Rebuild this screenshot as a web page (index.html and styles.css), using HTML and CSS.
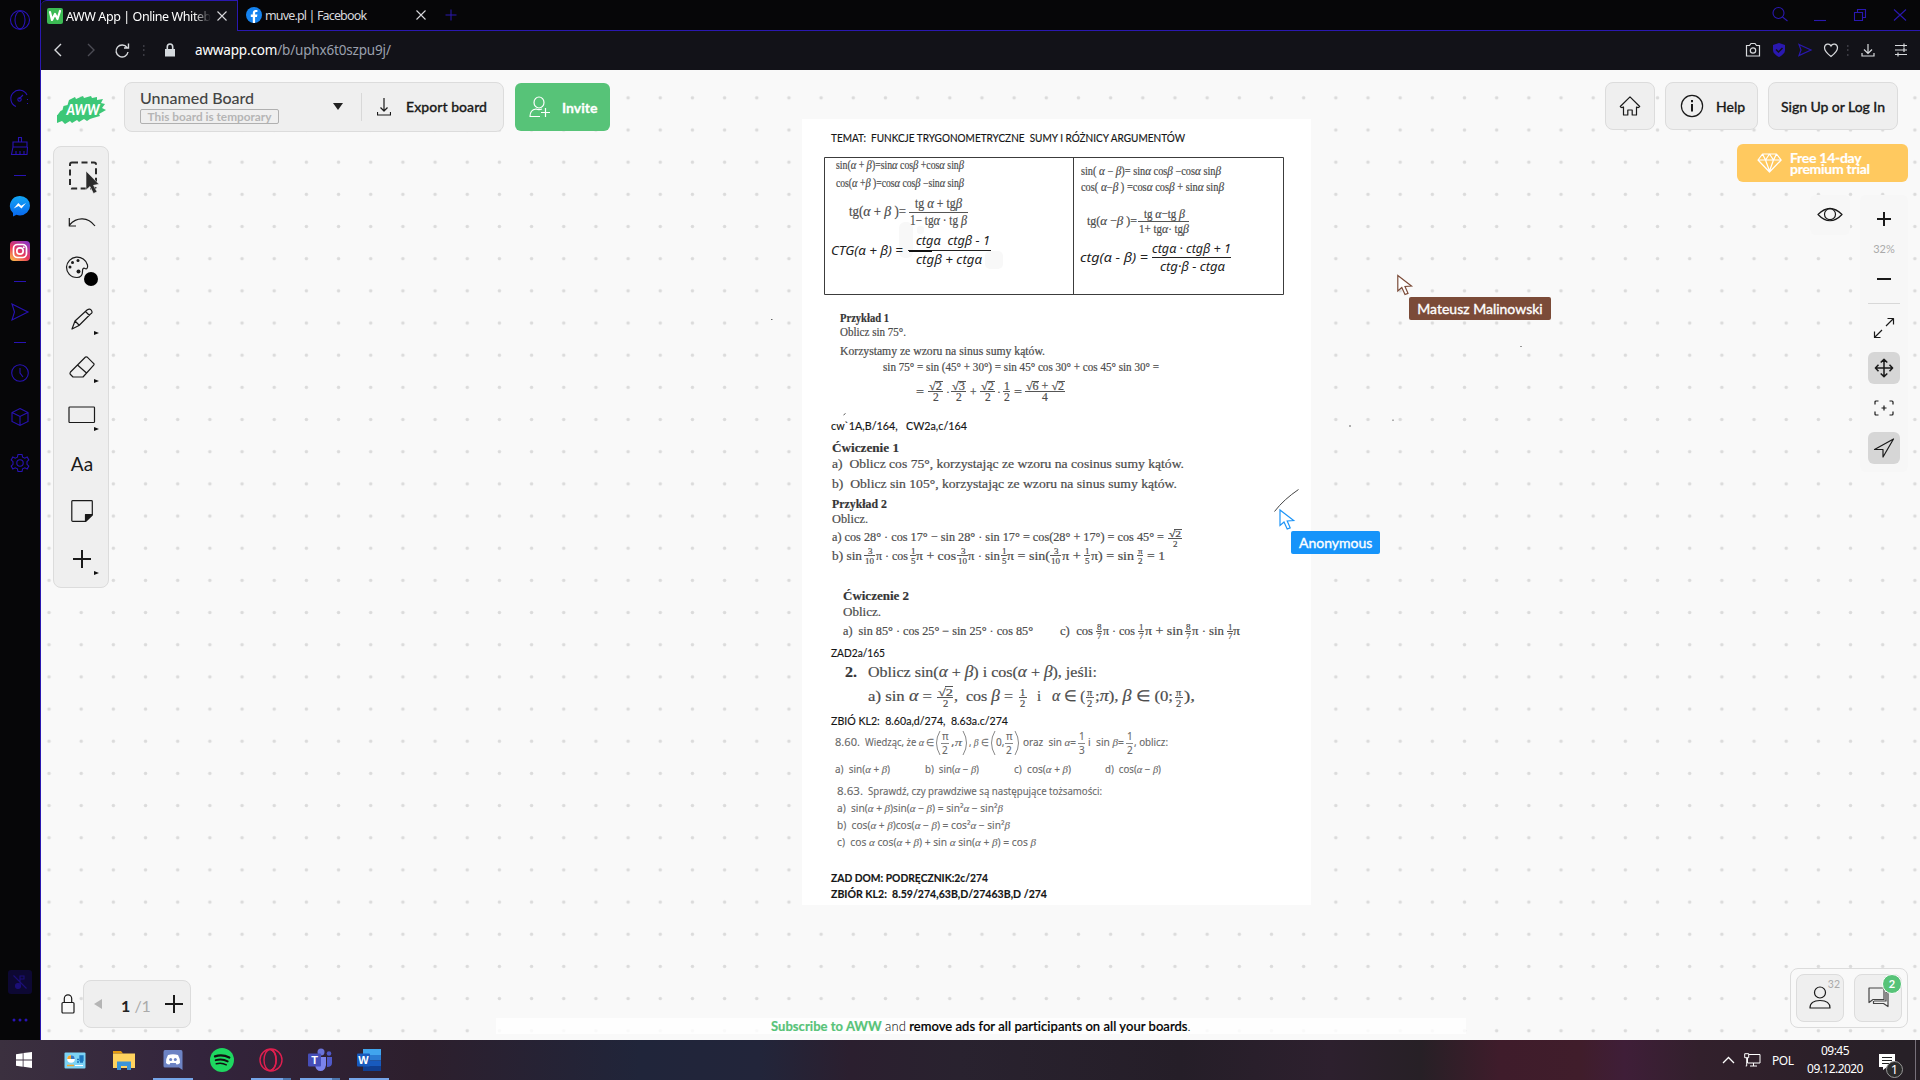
FILE: index.html
```html
<!DOCTYPE html>
<html lang="pl">
<head>
<meta charset="utf-8">
<title>AWW App | Online Whiteboard</title>
<link rel="stylesheet" href="styles.css">
</head>
<body>
<div class="desktop">
  <div class="browser">
    <nav class="sidebar">
      <div class="side h40"><svg width="22" height="22" viewBox="0 0 22 22"><circle cx="11" cy="11" r="9.5"/><ellipse cx="11" cy="11" rx="5" ry="8.7"/></svg></div>
      <div class="side h46 gap36"><svg width="22" height="22" viewBox="0 0 22 22"><path d="M7 18.5A8.500 8.500 0 1 1 18 7M10 11l4-4M18.500 11v1M18.500 15v1"/><circle cx="10.500" cy="11.500" r="1.700"/></svg></div>
      <div class="side h48"><svg width="22" height="22" viewBox="0 0 22 22"><path d="M9.500 7V2.500h3V7M4 7h14v5H4zM4 12l-1.500 7.500h15.500l.5-7.500M7 19v-3M11 19v-3M15 19v-3"/></svg></div>
      <div class="side h10"><i class="dash"></i></div>
      <div class="side h52"><svg class="solid" width="22" height="22" viewBox="0 0 22 22"><defs><linearGradient id="ms" x2="0" y2="1"><stop stop-color="#12a6f5"/><stop offset="1" stop-color="#0866ee"/></linearGradient></defs><path fill="url(#ms)" d="M11 1a10 9.700 0 0 1 0 19.400c-1.200 0-2.500-.2-3.500-.6L4 21.500v-3.600A9.800 9.800 0 0 1 11 1z"/><path fill="#fff" d="M4.700 13.500 9.300 8l2.900 2.700L17 8l-4.500 5.400-2.900-2.500z"/></svg></div>
      <div class="side h38"><svg class="solid" width="22" height="22" viewBox="0 0 22 22"><defs><linearGradient id="ig" x1=".1" y1="1" x2=".8" y2="0"><stop stop-color="#fdc14b"/><stop offset=".45" stop-color="#e9395a"/><stop offset="1" stop-color="#8f35c4"/></linearGradient></defs><rect x="1" y="1" width="20" height="20" rx="4" fill="url(#ig)"/><g fill="none" stroke="#fff" stroke-width="1.700"><rect x="4.500" y="4.500" width="13" height="13" rx="4"/><circle cx="11" cy="11" r="3.200"/></g><circle cx="14.800" cy="7.200" r="1" fill="#fff"/></svg></div>
      <div class="side h22"><i class="dash"></i></div>
      <div class="side h40"><svg width="20" height="20" viewBox="0 0 20 20"><path d="M2 2l16 8-16 8 2.500-8z"/></svg></div>
      <div class="side h20"><i class="dash"></i></div>
      <div class="side h41"><svg width="20" height="20" viewBox="0 0 20 20"><circle cx="10" cy="10" r="8.300"/><path d="M10 5v5l3 4"/></svg></div>
      <div class="side h48"><svg width="20" height="20" viewBox="0 0 20 20"><path d="M10 1.500l8 4v9l-8 4-8-4v-9zM2 5.500l8 4 8-4M10 9.500v9"/></svg></div>
      <div class="side h43"><svg width="20" height="20" viewBox="0 0 20 20"><path d="M8 1.500h4l.6 2.700 2.200 1L17.200 4l1.600 3-1.800 1.700v2.600l1.800 1.700-1.600 3-2.400-1.200-2.200 1-.6 2.700H8l-.6-2.700-2.200-1L2.800 16l-1.600-3L3 11.300V8.700L1.200 7l1.600-3 2.400 1.200 2.200-1z"/><circle cx="10" cy="10" r="3.200"/></svg></div>
      <div class="side h36 push"><span class="mute"><svg width="18" height="18" viewBox="0 0 18 18"><path d="M9 13V3h4v3H9M2.500 2.500l13 13"/><circle cx="7" cy="13" r="2.500" fill="#1c0f78"/></svg></span></div>
      <div class="side h40"><svg class="solid" width="18" height="6" viewBox="0 0 18 6"><g fill="#2813b4"><circle cx="3" cy="3" r="1.500"/><circle cx="9" cy="3" r="1.500"/><circle cx="15" cy="3" r="1.500"/></g></svg></div>
    </nav>

    <div class="window">
      <div class="tabs">
        <div class="tab active">
          <svg width="16" height="16" viewBox="0 0 16 16"><rect width="16" height="16" rx="2" fill="#3cba54"/><path d="M3 4l2 8 3-6 2.500 5L13 3" fill="none" stroke="#fff" stroke-width="2.200" stroke-linejoin="round" stroke-linecap="round"/></svg>
          <span class="tab-title fade">AWW App | Online Whitebo</span>
          <svg class="x" width="10" height="10" viewBox="0 0 10 10"><path d="M.5.500l9 9M9.500.500l-9 9"/></svg>
        </div>
        <div class="tab">
          <svg width="16" height="16" viewBox="0 0 16 16"><circle cx="8" cy="8" r="8" fill="#1583f0"/><path d="M6.800 16V10H4.800V7.600h2V6c0-2.100 1.200-3.100 3-3.100l1.600.1v2h-1c-1 0-1.300.5-1.300 1.200v1.400h2.300L11 10H9.100v6z" fill="#fff"/></svg>
          <span class="tab-title second">muve.pl | Facebook</span>
          <svg class="x" width="10" height="10" viewBox="0 0 10 10"><path d="M.5.500l9 9M9.500.500l-9 9"/></svg>
        </div>
        <svg class="newtab" width="12" height="12" viewBox="0 0 12 12"><path d="M6 .5v11M.5 6h11"/></svg>
        <div class="winctl">
          <svg viewBox="0 0 40 30"><circle cx="18.500" cy="13" r="5.500"/><path d="M22.500 17l5 4"/></svg>
          <svg viewBox="0 0 40 30"><path d="M14 20.500h12"/></svg>
          <svg viewBox="0 0 40 30"><path d="M14.500 12.500h8v8h-8zM17.500 12V9.500h8v8H23"/></svg>
          <svg viewBox="0 0 40 30"><path d="M14 9.500l12 11M26 9.500l-12 11"/></svg>
        </div>
      </div>

      <div class="addressbar">
        <svg class="nav" width="33" height="20" viewBox="0 0 33 20"><path d="M20 4l-6 6 6 6"/></svg>
        <svg class="nav dim" width="33" height="20" viewBox="0 0 33 20"><path d="M14 4l6 6-6 6"/></svg>
        <svg class="nav" width="31" height="20" viewBox="0 0 31 20"><path d="M20 7.500A6 6 0 1 0 21 12M21.500 3.500v4.500H17"/></svg>
        <span class="vdots first"></span>
        <svg class="lock" width="12" height="14" viewBox="0 0 12 14"><path d="M1 6h10v7.500H1z" fill="#d5dade"/><path d="M3.300 6V3.700a2.700 2.700 0 0 1 5.400 0V6" fill="none" stroke="#d5dade" stroke-width="1.600"/></svg>
        <span class="url">awwapp.com<span>/b/uphx6t0szpu9j/</span></span>
        <div class="actions">
          <svg width="26" height="20" viewBox="0 0 26 20"><path d="M6.500 5.500h3l1.500-2h4l1.500 2h3v10.500h-13z"/><circle cx="13" cy="10.500" r="2.700"/></svg>
          <svg width="26" height="20" viewBox="0 0 26 20"><path d="M13 3l6 2v5c0 3-3 5.500-6 7-3-1.500-6-4-6-7V5z" fill="#2a18b0" stroke="none"/><path d="M10 9.500l2.500 2.500L16.500 8" stroke="#111117" stroke-width="1.500"/></svg>
          <svg width="26" height="20" viewBox="0 0 26 20"><path d="M7 4.500l12 5.500-12 5.500L9 10z" stroke="#2a18b0"/></svg>
          <svg width="26" height="20" viewBox="0 0 26 20"><path d="M13 16.500C9 13.500 6.500 11 6.500 7.800c0-4 5-5.100 6.500-1.800 1.500-3.300 6.500-2.200 6.500 1.800 0 3.200-2.500 5.700-6.500 8.700z"/></svg>
          <span class="vdots"></span>
          <svg width="32" height="20" viewBox="0 0 32 20"><path d="M16 4v9M12 9.500l4 4 4-4M10 13v3h12v-3"/></svg>
          <svg width="34" height="20" viewBox="0 0 34 20"><path d="M11 5.500h12M11 10h12M11 14.500h12M20 3.500v4M20 8v4M14 12.500v4" /></svg>
        </div>
      </div>

      <main class="app">
        <svg class="board" viewBox="41 70 1879 970" aria-label="Tablica">
          <defs><pattern id="dots" x="32.950" y="81.750" width="32.170" height="32.170" patternUnits="userSpaceOnUse"><circle cx="16.080" cy="16.080" r="1.750" fill="#dbdbdb"/></pattern></defs>
          <rect x="41" y="70" width="1879" height="970" fill="#f9f9f9"/>
          <rect x="41" y="70" width="1879" height="970" fill="url(#dots)"/>
          <rect x="802" y="119" width="509" height="786" fill="#fff"/>

          <text class="cal" x="831" y="141.500" textLength="354">TEMAT:&#160; FUNKCJE TRYGONOMETRYCZNE&#160; SUMY I RÓŻNICY ARGUMENTÓW</text>
          <path class="frame" d="M824.500 157.500h459v137h-459zM1073.500 157.500v137"/>
          <g fill="#f8f8f8"><rect x="899" y="222" width="14" height="36" rx="6"/><rect x="917" y="226" width="7" height="8" rx="3"/><rect x="985" y="251" width="18" height="18" rx="5"/></g>

          <g class="rom" font-size="11.500">
            <text x="836" y="169" textLength="128">sin(<tspan>α</tspan> + <tspan>β</tspan>)=sin<tspan>α</tspan> cos<tspan>β</tspan> +cos<tspan>α</tspan> sin<tspan>β</tspan></text>
            <text x="836" y="187" textLength="128">cos(<tspan>α</tspan> +<tspan>β</tspan> )=cos<tspan>α</tspan> cos<tspan>β</tspan> −sin<tspan>α</tspan> sin<tspan>β</tspan></text>
            <text x="1081" y="174.500" textLength="140">sin( <tspan>α</tspan> − <tspan>β</tspan>)= sin<tspan>α</tspan> cos<tspan>β</tspan> −cos<tspan>α</tspan> sin<tspan>β</tspan></text>
            <text x="1081" y="190.500" textLength="143">cos( <tspan>α</tspan>−<tspan>β</tspan> ) =cos<tspan>α</tspan> cos<tspan>β</tspan> + sin<tspan>α</tspan> sin<tspan>β</tspan></text>
          </g>
          <g class="rom" font-size="14">
            <text x="849" y="215.500" textLength="57">tg(<tspan>α</tspan> + <tspan>β</tspan> )=</text>
            <text x="915" y="208" textLength="47">tg <tspan>α</tspan> + tg<tspan>β</tspan></text>
            <text x="910" y="225" textLength="57">1− tg<tspan>α</tspan> · tg <tspan>β</tspan></text>
          </g>
          <g class="rom" font-size="12.500">
            <text x="1087" y="224.500" textLength="50">tg(<tspan>α</tspan> −<tspan>β</tspan> )=</text>
            <text x="1144" y="218" textLength="41">tg <tspan>α</tspan>−tg <tspan>β</tspan></text>
            <text x="1139" y="232.500" textLength="50">1+ tg<tspan>α</tspan>· tg<tspan>β</tspan></text>
          </g>
          <g class="cam">
            <text x="831" y="254.500" textLength="72">CTG(α + β) =</text>
            <text x="916" y="244.500" textLength="74">ctgα&#160; ctgβ − 1</text>
            <text x="916" y="263.500" textLength="66">ctgβ + ctgα</text>
            <text x="1080" y="262" textLength="68">ctg(α − β) =</text>
            <text x="1152" y="252.500" textLength="79">ctgα · ctgβ + 1</text>
            <text x="1160" y="271" textLength="65">ctg·β − ctgα</text>
          </g>
          <path class="bar" d="M909 212.500h59M1138 221.500h51"/>
          <path class="bar dark" d="M908 250.500h83M1152 257.500h79"/>
          <path d="M909 251h23" stroke="#111" stroke-width="2"/>

          <g class="cm" font-size="11.500">
            <text class="b" x="840" y="322" textLength="49">Przykład 1</text>
            <text x="840" y="336" textLength="66">Oblicz sin 75°.</text>
            <text x="840" y="354.500" textLength="205">Korzystamy ze wzoru na sinus sumy kątów.</text>
            <text x="883" y="371" textLength="276">sin 75° = sin (45° + 30°) = sin 45° cos 30° + cos 45° sin 30° =</text>
            <text x="916" y="396" textLength="8">=</text><text x="946" y="396">·</text><text x="970" y="396">+</text><text x="997" y="396">·</text><text x="1014" y="396" textLength="8">=</text>
            <text x="929" y="390" textLength="13">√2</text><text x="952" y="390" textLength="13">√3</text><text x="981" y="390" textLength="13">√2</text><text x="1004" y="390">1</text><text x="1026" y="390" textLength="38">√6 + √2</text>
            <text x="933" y="401">2</text><text x="956" y="401">2</text><text x="985" y="401">2</text><text x="1004" y="401">2</text><text x="1042" y="401">4</text>
          </g>
          <path class="bar" d="M935 381.500h8M958 381.500h8M987 381.500h8M1032 381.500h7M1057 381.500h8M928 391.500h15M951 391.500h15M980 391.500h15M1003 391.500h7M1025 391.500h40"/>

          <text class="cal" x="831" y="429.500" textLength="136">cw`1A,B/164,&#160;&#160; CW2a,c/164</text>
          <path d="M843.500 415l2-1.500" stroke="#555"/>

          <g class="cm" font-size="12.500">
            <text class="b" x="832" y="452" textLength="67">Ćwiczenie 1</text>
            <text x="832" y="468" textLength="352">a)&#160; Oblicz cos 75°, korzystając ze wzoru na cosinus sumy kątów.</text>
            <text x="832" y="488" textLength="345">b)&#160; Oblicz sin 105°, korzystając ze wzoru na sinus sumy kątów.</text>
            <text class="b" x="832" y="507.500" textLength="55">Przykład 2</text>
            <text x="832" y="523" textLength="36">Oblicz.</text>
            <text x="832" y="541" textLength="332">a) cos 28° · cos 17° − sin 28° · sin 17° = cos(28° + 17°) = cos 45° =</text>
            <text x="832" y="560" textLength="30">b) sin</text><text x="876" y="560" textLength="32">π · cos</text><text x="916" y="560" textLength="40">π + cos</text><text x="968" y="560" textLength="32">π · sin</text><text x="1007" y="560" textLength="43">π = sin(</text><text x="1062" y="560" textLength="19">π +</text><text x="1091" y="560" textLength="43">π) = sin</text><text x="1147" y="560" textLength="18">= 1</text>
          </g>
          <g class="cm small" font-size="9">
            <text x="1169" y="537" textLength="12">√2</text><text x="1173" y="546.500">2</text>
            <text x="868" y="554">3</text><text x="865" y="563.500">10</text><text x="911" y="554">1</text><text x="911" y="563.500">5</text>
            <text x="961" y="554">3</text><text x="958" y="563.500">10</text><text x="1002" y="554">1</text><text x="1002" y="563.500">5</text>
            <text x="1054" y="554">3</text><text x="1051" y="563.500">10</text><text x="1085" y="554">1</text><text x="1085" y="563.500">5</text>
            <text x="1138" y="554">π</text><text x="1138" y="563.500">2</text>
          </g>
          <path class="bar" d="M1174 529.500h8M1168 538.500h14M864 555.500h11M910 555.500h6M957 555.500h11M1001 555.500h6M1050 555.500h11M1084 555.500h6M1137 555.500h6"/>

          <g class="cm" font-size="12">
            <text class="b" x="843" y="600" textLength="66">Ćwiczenie 2</text>
            <text x="843" y="616" textLength="38">Oblicz.</text>
            <text x="843" y="635" textLength="190">a)&#160; sin 85° · cos 25° − sin 25° · cos 85°</text>
            <text x="1060" y="635" textLength="33">c)&#160; cos</text><text x="1103" y="635" textLength="32">π · cos</text><text x="1145" y="635" textLength="38">π + sin</text><text x="1192" y="635" textLength="32">π · sin</text><text x="1233" y="635" textLength="7">π</text>
          </g>
          <g class="cm small" font-size="9">
            <text x="1097" y="629.500">8</text><text x="1097" y="639">7</text><text x="1139" y="629.500">1</text><text x="1139" y="639">7</text><text x="1186" y="629.500">8</text><text x="1186" y="639">7</text><text x="1228" y="629.500">1</text><text x="1228" y="639">7</text>
          </g>
          <path class="bar" d="M1096 631.500h6M1138 631.500h6M1185 631.500h6M1227 631.500h6"/>

          <text class="cal" x="831" y="657" textLength="54">ZAD2a/165</text>
          <g class="cm" font-size="15">
            <text class="b" x="845" y="676.500" textLength="12">2.</text>
            <text x="868" y="676.500" textLength="229">Oblicz sin(<tspan>α</tspan> + <tspan>β</tspan>) i cos(<tspan>α</tspan> + <tspan>β</tspan>), jeśli:</text>
            <text x="868" y="701" textLength="64">a) sin <tspan>α</tspan> =</text>
            <text x="954" y="701" textLength="59">,&#160; cos <tspan>β</tspan> =</text>
            <text x="1037" y="701" textLength="48">i&#160; &#160;<tspan>α</tspan> ∈ (</text>
            <text x="1095" y="701" textLength="78">;<tspan>π</tspan>), <tspan>β</tspan> ∈ (0;</text>
            <text x="1184" y="701" textLength="11">),</text>
          </g>
          <g class="cm small" font-size="10.500">
            <text x="938" y="695.500" textLength="15">√2</text><text x="943" y="706.500">2</text><text x="1020" y="695.500">1</text><text x="1020" y="706.500">2</text><text x="1087" y="695.500">π</text><text x="1087" y="706.500">2</text><text x="1176" y="695.500">π</text><text x="1176" y="706.500">2</text>
          </g>
          <path class="bar" d="M945 686.500h8M937 697.500h16M1019 697.500h8M1086 697.500h8M1175 697.500h8"/>

          <text class="cal" x="831" y="725" textLength="177">ZBIÓ KL2:&#160; 8.60a,d/274,&#160; 8.63a.c/274</text>
          <g class="sans">
            <text x="835" y="746" textLength="25">8.60.</text>
            <text x="865" y="746" textLength="70">Wiedząc, że <tspan>α</tspan> ∈</text>
            <text x="951" y="746" textLength="11">,<tspan>π</tspan></text>
            <text x="969" y="746" textLength="20">, <tspan>β</tspan> ∈</text>
            <text x="996" y="746">0,</text>
            <text x="1023" y="746" textLength="53">oraz&#160; sin <tspan>α</tspan>=</text>
            <text x="1088" y="746" textLength="36">i&#160; sin <tspan>β</tspan>=</text>
            <text x="1134" y="746" textLength="34">, oblicz:</text>
            <text x="942" y="740">π</text><text x="942" y="754">2</text><text x="1006" y="740">π</text><text x="1006" y="754">2</text><text x="1079" y="740">1</text><text x="1079" y="754">3</text><text x="1127" y="740">1</text><text x="1127" y="754">2</text>
            <text x="835" y="773" textLength="55">a)&#160; sin(<tspan>α</tspan> + <tspan>β</tspan>)</text>
            <text x="925" y="773" textLength="54">b)&#160; sin(<tspan>α</tspan> − <tspan>β</tspan>)</text>
            <text x="1014" y="773" textLength="57">c)&#160; cos(<tspan>α</tspan> + <tspan>β</tspan>)</text>
            <text x="1105" y="773" textLength="56">d)&#160; cos(<tspan>α</tspan> − <tspan>β</tspan>)</text>
            <text x="837" y="795" textLength="26">8.63.</text>
            <text x="868" y="795" textLength="234">Sprawdź, czy prawdziwe są następujące tożsamości:</text>
            <text x="837" y="812" textLength="166">a)&#160; sin(<tspan>α</tspan> + <tspan>β</tspan>)sin(<tspan>α</tspan> − <tspan>β</tspan>) = sin²<tspan>α</tspan> − sin²<tspan>β</tspan></text>
            <text x="837" y="829" textLength="173">b)&#160; cos(<tspan>α</tspan> + <tspan>β</tspan>)cos(<tspan>α</tspan> − <tspan>β</tspan>) = cos²<tspan>α</tspan> − sin²<tspan>β</tspan></text>
            <text x="837" y="846" textLength="199">c)&#160; cos <tspan>α</tspan> cos(<tspan>α</tspan> + <tspan>β</tspan>) + sin <tspan>α</tspan> sin(<tspan>α</tspan> + <tspan>β</tspan>) = cos <tspan>β</tspan></text>
          </g>
          <path class="bar light" d="M941 743.500h8M1005 743.500h8M1078 743.500h7M1126 743.500h7M940 731q-7 12 0 24M963 731q7 12 0 24M995 731q-7 12 0 24M1015 731q7 12 0 24"/>
          <text class="cal b" x="831" y="882" textLength="157">ZAD DOM: PODRĘCZNIK:2c/274</text>
          <text class="cal b" x="831" y="898" textLength="216">ZBIÓR KL2:&#160; 8.59/274,63B,D/27463B,D /274</text>

          <path d="M1274.500 511.500C1281 503 1289 496 1298.500 489.500" fill="none" stroke="#444"/>
          <path d="M1393 419.500v1.500M1350 425v2M771 319.500h1.500" stroke="#666"/>
          <path d="M1520 346.500h2" stroke="#999"/>
          <path d="M1397.800 275.500v15.500l4-3.500 3.200 7 3-1.200-3-6.800 6.500-.5z" fill="#fff" stroke="#7b4b38" stroke-width="1.200"/>
          <path d="M1280 510v15.500l4-3.500 3.200 7 3-1.200-3-6.800 6.500-.5z" fill="#fff" stroke="#1c94f7" stroke-width="1.200"/>
        </svg>
        <span class="cursor-label mateusz">Mateusz Malinowski</span>
        <span class="cursor-label anonymous">Anonymous</span>

        <div class="ui">
          <header class="topbar">
            <svg class="logo" width="50" height="28" viewBox="0 0 50 28"><path d="M12 4l6-3 1 2 7-3 1 2 7-2 1 2 5-1v3l6-1-2 4 4 1-3 4 4 2-7 4 1 2-7 2-3 1-3 2-3-2-5 3-2-2-5 3-2-2-5 3-3-3-5 2-1-3-3-1 2-4H.5l3-4 2-1 1-4 4-1z" fill="#3cc777"/><text x="26" y="19" textLength="33">AWW</text></svg>
            <div class="panel boardbar">
              <div class="boardname"><span class="name">Unnamed Board</span><span class="temp">This board is temporary</span></div>
              <span class="caret"></span>
              <span class="vline"></span>
              <svg width="14" height="18" viewBox="0 0 14 18"><path d="M7 0v12.500M3.500 9.500L7 13l3.500-3.500M.5 14v3h13v-3"/></svg>
              <span class="export">Export board</span>
            </div>
            <div class="invite"><svg width="22" height="22" viewBox="0 0 22 22"><ellipse cx="10" cy="6.500" rx="5" ry="5.500"/><path d="M11 20.500H1c0-5 2.500-7 6-7.500q3 1.200 6 0M16.500 12v9M12 16.500h9"/></svg><span>Invite</span></div>
            <div class="panel home"><svg width="22" height="20" viewBox="0 0 22 20"><path d="M11 .8L1.300 10.500q1 1.800 3.200.5v8h4.300v-5h4.400v5h4.300v-8q2 1.300 3.200-.5z"/></svg></div>
            <div class="panel help"><svg width="24" height="24" viewBox="0 0 24 24"><circle cx="12" cy="12" r="10.600"/><path d="M12 10v7.500M12 6v2.200" stroke-width="2"/></svg><span>Help</span></div>
            <div class="panel sign">Sign Up or Log In</div>
          </header>

          <div class="middle">
            <div class="panel tools">
              <div class="tool"><svg width="32" height="34" viewBox="0 0 32 34"><rect x="2" y="2.500" width="26" height="26" rx="2" fill="none" stroke="#2b2b2b" stroke-width="2" stroke-dasharray="6 3.500"/><path d="M18 11v19l4-3.500 3.500 7 3.500-1.700-3.500-6.500 5.500-1z" fill="#2b2b2b" stroke="#efefef" stroke-width=".6"/></svg></div>
              <div class="tool"><svg class="up" width="28" height="12" viewBox="0 0 28 12"><path d="M27 10C20 1 9 .5 1.500 9M1.300 2v8H8"/></svg></div>
              <div class="tool"><svg class="palette" width="34" height="32" viewBox="0 0 34 32"><path d="M12 23.500C5 23.500 1.500 18 1.500 13A10.700 10.700 0 0 1 22.500 11c.6 3-.8 4.500-2.500 3.500s-2.600.5-2.500 3c0 3-1.500 6-5.500 6z"/><g fill="#1a1a1a" stroke="none"><circle cx="5" cy="13" r="1.500"/><circle cx="7.500" cy="8.500" r="1.500"/><circle cx="13" cy="6.500" r="1.500"/><circle cx="13.500" cy="17.500" r="2"/></g><circle cx="26" cy="25" r="7" fill="#000" stroke="none"/></svg></div>
              <div class="tool sub"><svg width="22" height="22" viewBox="0 0 22 22"><path d="M1 21l3-8L16 2q3-2 4.500.5T19.500 6L8 17.500zM14.500 3.500l4 4M4 13l4 4"/></svg></div>
              <div class="tool sub"><svg width="26" height="22" viewBox="0 0 26 22"><path d="M16.500 1q1-.5 2 .3l6 6q1 .9.200 1.900L14 21H4L1.500 18.500q-1-1 0-2.500zM8.500 9l9 8"/></svg></div>
              <div class="tool sub"><svg width="28" height="18" viewBox="0 0 28 18"><rect x="1" y="1" width="25.500" height="15.500" rx=".8"/></svg></div>
              <div class="tool aa">Aa</div>
              <div class="tool"><svg width="22" height="22" viewBox="0 0 22 22"><path d="M1.500.700h19q.8 0 .8.800V15l-6.500 6.300h-13q-1 0-1-.8v-19q0-.8.700-.8z"/><path d="M21 14.500h-6.500V21z" fill="#1a1a1a"/></svg></div>
              <div class="tool sub"><svg width="18" height="18" viewBox="0 0 18 18"><path d="M9 0v18M0 9h18" stroke-width="2"/></svg></div>
            </div>

            <div class="rightside">
              <div class="trial"><svg width="25" height="20" viewBox="0 0 25 20"><path d="M5.500 1h14l4.700 6L12.500 19 1 7zM1 7h23M5.500 1l3 6 4-6 4 6 3-6M8.500 7l4 11 4-11"/></svg><span>Free 14-day<br>premium trial</span></div>
              <div class="views">
                <div class="soft eye"><svg width="26" height="16" viewBox="0 0 26 16"><path d="M1 7.500Q13-4.500 25 7.500 13 20 1 7.500z"/><circle cx="13" cy="7.200" r="5.500"/></svg></div>
                <div class="soft zoombar">
                  <div class="zb"><svg width="14" height="14" viewBox="0 0 14 14"><path d="M7 0v14M0 7h14" stroke-width="2"/></svg></div>
                  <div class="pct">32%</div>
                  <div class="zb"><svg width="14" height="14" viewBox="0 0 14 14"><path d="M0 7h14" stroke-width="2"/></svg></div>
                  <div class="hline"></div>
                  <div class="vb"><svg width="22" height="22" viewBox="0 0 22 22"><path d="M13 9l7.500-7.500M14.500 1.500h6v6M9 13l-7.500 7.500M1.500 14.500v6h6"/></svg></div>
                  <div class="vb on"><svg width="20" height="20" viewBox="0 0 20 20"><path d="M10 1.500v17M1.500 10h17M6.700 4.500L10 1.400l3.300 3.100M6.700 15.500l3.300 3.100 3.300-3.100M4.500 6.700L1.400 10l3.100 3.300M15.500 6.700l3.100 3.300-3.100 3.300" stroke-width="1.500"/></svg></div>
                  <div class="vb"><svg width="20" height="16" viewBox="0 0 20 16"><path d="M1 4.500V2q0-1 1-1h2.500M15.500 1H18q1 0 1 1v2.500M19 11.500V14q0 1-1 1h-2.500M4.500 15H2q-1 0-1-1v-2.500M10 5.500v5M7.500 8h5"/></svg></div>
                  <div class="vb on"><svg width="22" height="22" viewBox="0 0 22 22"><path d="M1.500 12.500L20.500 2 10 20V12.500z"/></svg></div>
                </div>
              </div>
            </div>
          </div>

          <footer class="bottombar">
            <svg class="padlock" width="14" height="20" viewBox="0 0 14 20"><rect x="1" y="8.500" width="12" height="10.500" rx="1"/><path d="M3.300 8.500V4.500a3.700 3.700 0 0 1 7.400 0v4"/></svg>
            <div class="panel pages"><span class="prev"></span><span class="pn"><b>1</b> /1</span><svg width="18" height="18" viewBox="0 0 18 18"><path d="M9 0v18M0 9h18" stroke-width="2"/></svg></div>
            <div class="subscribe"><p><b>Subscribe to AWW</b> <i>and</i> remove ads for all participants on all your boards<i>.</i></p></div>
            <div class="people">
              <div class="panel pbtn"><svg width="22" height="23" viewBox="0 0 22 23"><circle cx="11" cy="6.500" r="5.500"/><path d="M1 22q0-7.500 10-7.500T21 22z"/></svg><span class="count">32</span></div>
              <div class="panel pbtn"><svg class="chat" width="21" height="21" viewBox="0 0 21 21"><path d="M1 1h15v11.500H5L1 15.500zM5.500 14v2.500h10l4.500 3V5h-2M6 14h12V5"/></svg><span class="badge">2</span></div>
            </div>
          </footer>
        </div>
      </main>
    </div>
  </div>

  <div class="taskbar">
    <div class="task start"><svg width="16" height="16" viewBox="0 0 16 16"><path fill="#fff" d="M0 2.200l6.700-1v6.400H0zM7.500 1.100L16 0v7.600H7.500zM0 8.400h6.700v6.400L0 13.800zM7.500 8.400H16V16l-8.500-1.200z"/></svg></div>
    <div class="task"><svg width="22" height="17" viewBox="0 0 22 17"><rect x=".5" y=".5" width="21" height="16" rx="1" fill="#7cd3f5"/><circle cx="7" cy="7" r="3.800" fill="#fff"/><path d="M7 7V3.200A3.800 3.800 0 0 1 10.800 7z" fill="#3278c8"/><path d="M7 7H3.200A3.800 3.800 0 0 1 7 3.200z" fill="#f5a52b"/><path d="M13 10h2M13 7.500h2M16 4h3v1.500h-3zM16 7h3v1.500h-3zM16 10h3" stroke="#1c76bd" stroke-width="1.300"/><path d="M3 13.500h7" stroke="#f5a52b" stroke-width="1.500"/><path d="M11 13.500h8" stroke="#fff"/></svg></div>
    <div class="task"><svg width="22" height="19" viewBox="0 0 22 19"><path fill="#e59b10" d="M0 0h8l2 2.500H0z"/><path fill="#ffd35e" d="M0 2.500h22V17H0z"/><path fill="#3a94d8" d="M4 10.500h14V19h-4v-4H8v4H4z"/></svg></div>
    <div class="task run"><svg width="20" height="22" viewBox="0 0 20 22"><path fill="#6d83c4" d="M2 1h16q1.500 0 1.500 2v18L16 18.500H2Q.5 18.500.5 17V3Q.5 1 2 1z"/><path fill="#fff" d="M5 6q5-1.500 10 0 2 3 2 8-2 1.500-3.500 1.500l-.8-1.500H7.300l-.8 1.500Q4.500 15.500 3 14q0-5 2-8z"/><circle cx="7.700" cy="10.500" r="1.500" fill="#6d83c4"/><circle cx="12.300" cy="10.500" r="1.500" fill="#6d83c4"/></svg></div>
    <div class="task"><svg width="24" height="24" viewBox="0 0 24 24"><circle cx="12" cy="12" r="12" fill="#1ed760"/><g fill="none" stroke="#111" stroke-linecap="round"><path d="M5 8.300q7.500-2.300 14.300 1.200" stroke-width="2.300"/><path d="M5.700 12.200q6.500-1.800 12 1.200" stroke-width="1.900"/><path d="M6.300 15.700q5.500-1.400 10 1.100" stroke-width="1.500"/></g></svg></div>
    <div class="task run two"><svg width="24" height="24" viewBox="0 0 24 24"><g fill="none" stroke="#e01f4f" stroke-width="1.400"><circle cx="12" cy="12" r="11"/><ellipse cx="11" cy="12" rx="6" ry="10.500"/><path d="M12 1.500c7 3 7 18 0 21"/></g></svg></div>
    <div class="task run two"><svg width="24" height="24" viewBox="0 0 24 24"><circle cx="13" cy="4" r="3.500" fill="#6a73d9"/><circle cx="21" cy="5.500" r="2.300" fill="#5059c9"/><path fill="#7b83eb" d="M7 9h11v8q-1 6-5.500 6T7 17z"/><path fill="#5059c9" d="M19 9h5v6q0 4-5 4z"/><rect y="5.500" width="13" height="13" rx="1" fill="#464eb8"/><text x="6.500" y="16" fill="#fff" text-anchor="middle">T</text></svg></div>
    <div class="task run"><svg width="24" height="24" viewBox="0 0 24 24"><path fill="#41a5ee" d="M6 1h18v6H6z"/><path fill="#2b7cd3" d="M6 7h18v5.500H6z"/><path fill="#185abd" d="M6 12.500h18V18H6z"/><path fill="#103f91" d="M6 18h18v5H6z"/><rect y="5.500" width="13" height="13" rx="1" fill="#185abd"/><text x="6.500" y="16" fill="#fff" text-anchor="middle">W</text></svg></div>
    <div class="tray">
      <svg width="13" height="8" viewBox="0 0 13 8"><path d="M1 7l5.500-5.500L12 7" stroke-width="1.300"/></svg>
      <svg width="17" height="14" viewBox="0 0 17 14"><path d="M5 1.500h11v8.500H3.500V5M9.500 10v3M6 13h7M.7.700h4v4h-4zM2.700 5v8h-1"/></svg>
      <span class="lang">POL</span>
      <span class="clock">09:45<br>09.12.2020</span>
      <span class="note"><svg width="24" height="24" viewBox="0 0 24 24"><path fill="#fff" stroke="none" d="M0 0h16v13H8l-4 3v-3H0z"/><path d="M3 3.500h10M3 6.500h10M3 9.500h7" stroke="#222"/><circle cx="15.500" cy="15.500" r="8" fill="#2b2b2b" stroke="#999"/><text x="15.500" y="20" text-anchor="middle">1</text></svg></span>
      <span class="peek"></span>
    </div>
  </div>
</div>
<script src="board.js"></script>
</body>
</html>
```
FILE: board.js
```js
// Board lines keep their set width by scaling glyphs together with the gaps.
document.querySelectorAll("text[textLength]").forEach(function (line) {
  line.setAttribute("lengthAdjust", "spacingAndGlyphs");
});
```
FILE: styles.css
```css
* { box-sizing: border-box; }
body { margin: 0; background: #060608; font-family: Lato, sans-serif; color: #1a1a1a; }
.desktop { display: flex; flex-direction: column; width: 1920px; height: 1080px; overflow: hidden; }
.browser { display: flex; flex: 1; min-height: 0; }
svg { display: block; flex: none; }

/* browser side panel */
.sidebar { width: 40px; display: flex; flex-direction: column; background: #060608; }
.side { display: flex; align-items: center; justify-content: center; width: 40px; }
.side svg { fill: none; stroke: #2813b4; stroke-width: 1.1; }
.side svg.solid { stroke: none; }
.dash { width: 12px; height: 1px; background: #2813b4; }
.h10 { height: 10px; } .h20 { height: 20px; } .h22 { height: 22px; } .h36 { height: 36px; }
.h38 { height: 38px; } .h40 { height: 40px; } .h41 { height: 41px; } .h43 { height: 43px; }
.h46 { height: 46px; } .h48 { height: 48px; } .h52 { height: 52px; }
.gap36 { margin-top: 36px; }
.push { margin-top: auto; }
.mute { display: flex; align-items: center; justify-content: center; width: 24px; height: 24px; border-radius: 3px; background: #0d0833; }
.side .mute svg { stroke: #1c0f78; }

/* tabs and address bar */
.window { flex: 1; min-width: 0; display: flex; flex-direction: column; border-left: 1px solid #2a18b0; }
.tabs { display: flex; height: 31px; background: #060608; font: 12.5px "Noto Sans", sans-serif; color: #d8d8dc; }
.tab { display: flex; align-items: center; width: 197px; padding: 0 0 0 8px; border-bottom: 1px solid #2a18b0; }
.tab.active { width: 197px; padding-left: 6px; background: #121218; border: 1px solid #2a18b0; border-width: 1px 1px 0 0; border-top-left-radius: 6px; color: #fff; }
.tab-title { width: 151px; margin-left: 3px; white-space: nowrap; overflow: hidden; letter-spacing: -.42px; }
.tab-title.second { letter-spacing: -.85px; }
.tab-title.fade { width: 145px; margin-right: 6px; -webkit-mask-image: linear-gradient(90deg, #000 88%, transparent); mask-image: linear-gradient(90deg, #000 88%, transparent); }
.x { fill: none; stroke: #d8d8dc; stroke-width: 1.1; }
.newtab { box-sizing: content-box; padding: 9px 0 9px 10px; fill: none; stroke: #2a18b0; border-bottom: 1px solid #2a18b0; }
.winctl { display: flex; flex: 1; justify-content: flex-end; border-bottom: 1px solid #2a18b0; }
.winctl svg { width: 40px; height: 30px; fill: none; stroke: #2a18b0; stroke-width: 1.1; }
.addressbar { display: flex; align-items: center; height: 39px; padding-bottom: 1px; background: #121218; }
.nav { fill: none; stroke: #d8dadd; stroke-width: 1.4; }
.nav.dim { stroke: #4c4c54; }
.vdots { width: 8px; height: 11px; background: repeating-linear-gradient(#3a3a42 0 2px, transparent 2px 4.500px) center / 1.500px 11px no-repeat; }
.vdots.first { margin-left: 2px; }
.lock { margin-left: 16px; }
.url { margin-left: 19px; color: #fff; font: 13.5px "Noto Sans", sans-serif; letter-spacing: -.17px; }
.url span { color: #9aa0ad; }
.actions { display: flex; align-items: center; margin-left: auto; padding-right: 2px; }
.actions svg { fill: none; stroke: #d8dadd; stroke-width: 1.2; }

/* whiteboard */
.app { position: relative; height: 970px; background: #f9f9f9; }
.board { position: absolute; inset: 0; width: 1879px; height: 970px; }
.board text { white-space: pre; }
.cal { font: 11px Lato, sans-serif; fill: #151515; stroke: #151515; stroke-width: .15px; }
.cal.b { font-weight: 700; }
.rom, .cm { font-family: "Liberation Serif", serif; fill: #4c4c4c; stroke: #4c4c4c; stroke-width: .2px; }
.rom tspan, .cm tspan, .sans tspan { font-style: italic; font-family: "Liberation Serif", serif; font-size: 1.08em; }
.cm .b { font-weight: 700; fill: #333; }
.cam { font: italic 12px "Noto Sans", sans-serif; fill: #222; }
.sans { font: 10px "Noto Sans", sans-serif; fill: #666; stroke: #777; stroke-width: .1px; }
.frame { fill: none; stroke: #3c3c3c; }
.bar { fill: none; stroke: #555; }
.bar.dark { stroke: #222; }
.bar.light { stroke: #888; }
.cursor-label { position: absolute; height: 23px; padding: 0 8px; border-radius: 2px; color: #fff; font-size: 14px; line-height: 24px; white-space: nowrap; text-align: center; -webkit-text-stroke: .35px #fff; }
.mateusz { left: 1368px; top: 227px; width: 142px; background: #7b4b38; }
.anonymous { left: 1250px; top: 461px; width: 89px; background: #1694fa; }

/* controls over the board */
.ui { position: relative; display: flex; flex-direction: column; height: 970px; }
.panel { background: #efefef; border: 1px solid #dcdcdc; border-radius: 8px; }
.ui svg { fill: none; stroke: #1a1a1a; stroke-width: 1.2; stroke-linejoin: round; }
.topbar { display: flex; align-items: flex-start; height: 74px; padding: 12px 22px 0 16px; font-size: 14px; font-weight: 500; -webkit-text-stroke: .3px; }
.topbar .logo { margin: 14px 17px 0 0; stroke: none; }
.logo text { font: italic 900 15px Lato, sans-serif; fill: #fff; stroke: none; text-anchor: middle; }
.boardbar { display: flex; align-items: center; width: 380px; height: 50px; padding: 0 0 1px 15px; }
.boardname { width: 193px; display: flex; flex-direction: column; align-items: flex-start; }
.name { font-size: 16px; line-height: 18px; color: #444; letter-spacing: 0; -webkit-text-stroke: 0; padding-bottom: 2px; }
.temp { width: 139px; height: 15px; border: 1px solid #b0b0b0; border-radius: 2px; color: #b5b5b5; font-size: 11.800px; font-weight: 700; line-height: 13px; text-align: center; white-space: nowrap; -webkit-text-stroke: 0; }
.caret { border: 5px solid transparent; border-top: 7px solid #222; border-bottom: 0; }
.vline { width: 1px; height: 28px; margin: 0 15px 0 18px; background: #d8d8d8; }
.export { margin-left: 15px; letter-spacing: .06px; }
.invite { display: flex; align-items: center; gap: 11px; width: 95px; height: 48px; margin: 1px auto 0 11px; padding-left: 14px; border-radius: 6px; background: #57c378; color: #fff; font-weight: 700; }
.invite svg { stroke: #fff; }
.home { width: 50px; height: 48px; margin-right: 10px; display: flex; align-items: center; justify-content: center; }
.help { width: 93px; height: 48px; margin-right: 10px; padding-left: 14px; display: flex; align-items: center; gap: 12px; }
.sign { width: 130px; height: 48px; line-height: 48px; text-align: center; white-space: nowrap; letter-spacing: -.05px; }
.middle { display: flex; justify-content: space-between; flex: 1; padding: 0 12px 0 12px; }
.tools { width: 56px; height: 442px; margin-top: 2px; padding-top: 4px; }
.tool { position: relative; display: flex; align-items: center; justify-content: center; height: 48px; padding-left: 2px; }
.tool:first-child { padding-left: 5px; padding-top: 3px; }
.tool .up { margin-top: -2px; }
.tool .palette { margin-top: -3px; }
.sub::after { content: ""; position: absolute; left: 40px; top: 36px; border: 2.500px solid transparent; border-left: 5px solid #111; border-right: 0; }
.aa { font-size: 19px; }
.rightside { display: flex; flex-direction: column; align-items: flex-end; }
.trial { display: flex; align-items: center; gap: 8px; width: 171px; height: 38px; padding: 0 0 1px 20px; border-radius: 6px; background: #ffc95f; color: #fff; font-size: 14px; font-weight: 700; line-height: 11px; white-space: nowrap; letter-spacing: -.28px; -webkit-text-stroke: .2px; }
.trial svg { stroke: #fff; }
.views { display: flex; gap: 10px; margin-top: 13px; }
.soft { background: #f7f7f7; border-radius: 6px; }
.eye { display: flex; align-items: center; justify-content: center; width: 40px; height: 40px; }
.zoombar { width: 48px; height: 277px; display: flex; flex-direction: column; align-items: center; }
.zb { height: 48px; display: flex; align-items: center; }
.pct { height: 12px; line-height: 12px; font-size: 11px; color: #aaa; }
.hline { width: 32px; height: 1px; margin-bottom: 8px; background: #d8d8d8; }
.vb { display: flex; align-items: center; justify-content: center; width: 32px; height: 32px; margin-bottom: 8px; border-radius: 6px; }
.vb.on { background: #d6d6d6; }
.bottombar { display: flex; height: 72px; padding: 0 12px 0 20px; }
.padlock { margin: 26px 8px 0 0; }
.pages { display: flex; align-items: center; width: 108px; height: 48px; margin-top: 12px; padding-left: 10px; }
.prev { border: 5.500px solid transparent; border-right: 8px solid #b5b5b5; border-left: 0; }
.pn { width: 44px; margin: 2px 0 0 19px; font-size: 16px; color: #aaa; }
.pn b { color: #222; }
.subscribe { width: 970px; height: 16px; margin: 50px 0 0 305px; background: rgba(255,255,255,.82); }
.subscribe p { margin: 0 0 0 275px; font-size: 13px; font-weight: 500; line-height: 16px; white-space: nowrap; color: #000; letter-spacing: .045px; -webkit-text-stroke: .2px; }
.subscribe b { color: #57c378; }
.subscribe i { font-style: normal; font-weight: 300; -webkit-text-stroke: 0; }
.people { display: flex; gap: 10px; width: 118px; height: 60px; margin-left: auto; padding: 5px; border: 1px solid #dcdcdc; border-radius: 8px; background: #f9f9f9; }
.pbtn { position: relative; width: 48px; height: 48px; display: flex; align-items: center; justify-content: center; padding-bottom: 1px; }
.ui .chat { stroke: #444; }
.count { position: absolute; right: 3px; top: 3px; font-size: 10.5px; color: #aaa; }
.badge { position: absolute; right: -1px; top: -1px; width: 20px; height: 20px; border: 1px solid #fff; border-radius: 50%; background: #57c378; color: #fff; font-size: 11px; font-weight: 700; line-height: 18px; text-align: center; }

/* taskbar */
.taskbar { display: flex; height: 40px; background: linear-gradient(90deg, #3b303f 0, #33243c 200px, #2d1f2d 420px, #20253a 640px, #22253a 760px, #2b1f2f 850px, #29222f 960px, #251e28 1180px, #2d202e 1330px, #272026 1420px, #3f1c2b 1500px, #401d2b 1580px, #3f1e38 1625px, #32202c 1700px, #272027 1900px); }
.task { display: flex; align-items: center; justify-content: center; width: 40px; height: 40px; margin-right: 9px; }
.start { width: 48px; margin-right: 7px; }
.task text { font: 700 11px "Liberation Sans", sans-serif; }
.run { box-shadow: inset 0 -2px #76a5e8; }
.run.two { background: linear-gradient(90deg, #76a5e8 32px, #4d76ad 32px) bottom / 100% 2px no-repeat; box-shadow: none; }
.tray { display: flex; align-items: center; margin-left: auto; color: #fff; font: 12px "Noto Sans", sans-serif; }
.tray svg { fill: none; stroke: #fff; margin-right: 9px; }
.lang { width: 24px; margin-left: 2px; letter-spacing: -.4px; }
.clock { width: 60px; margin-left: 9px; line-height: 18px; text-align: center; letter-spacing: -.55px; white-space: nowrap; }
.note { margin: 11px 0 0 14px; }
.note svg { margin: 0; }
.note text { font: 13px "Noto Sans", sans-serif; fill: #fff; stroke: none; }
.peek { width: 1px; height: 40px; margin: 0 4px 0 12px; background: #77707a; }
```
